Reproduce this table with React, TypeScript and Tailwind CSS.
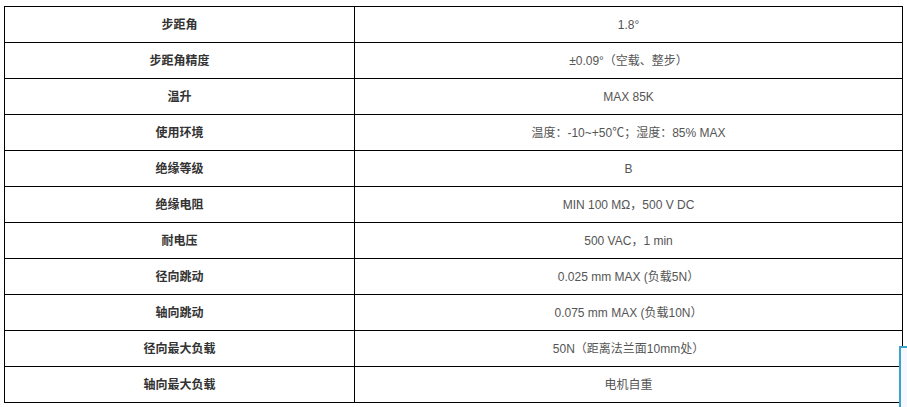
const rows: [string, string][] = [
  ['步距角', '1.8°'],
  ['步距角精度', '±0.09°（空载、整步）'],
  ['温升', 'MAX 85K'],
  ['使用环境', '温度：-10~+50℃；湿度：85% MAX'],
  ['绝缘等级', 'B'],
  ['绝缘电阻', 'MIN 100 MΩ，500 V DC'],
  ['耐电压', '500 VAC，1 min'],
  ['径向跳动', '0.025 mm MAX (负载5N）'],
  ['轴向跳动', '0.075 mm MAX (负载10N）'],
  ['径向最大负载', '50N（距离法兰面10mm处）'],
  ['轴向最大负载', '电机自重'],
];

export default function App() {
  return (
    <div
      className="relative h-[407px] w-[907px] overflow-hidden bg-white pl-[4px] pt-[6px]"
      style={{ fontFamily: '"Liberation Sans", Arial, "Noto Sans CJK SC", sans-serif' }}
    >
      <table className="w-[899px] border-collapse text-[12px]">
        <tbody>
          {rows.map(([label, value]) => (
            <tr key={label} className="h-[36px]">
              <td className="w-[350px] border border-black p-0 text-center font-bold text-[#333]">
                {label}
              </td>
              <td className="border border-black p-0 text-center text-[#555]">{value}</td>
            </tr>
          ))}
        </tbody>
      </table>

      {/* side widget peeking in at the bottom right */}
      <div className="absolute left-[899px] top-[346px] h-[80px] w-[40px] border-2 border-[#3ea2cf] bg-[#f5f8fc]" />
    </div>
  );
}
